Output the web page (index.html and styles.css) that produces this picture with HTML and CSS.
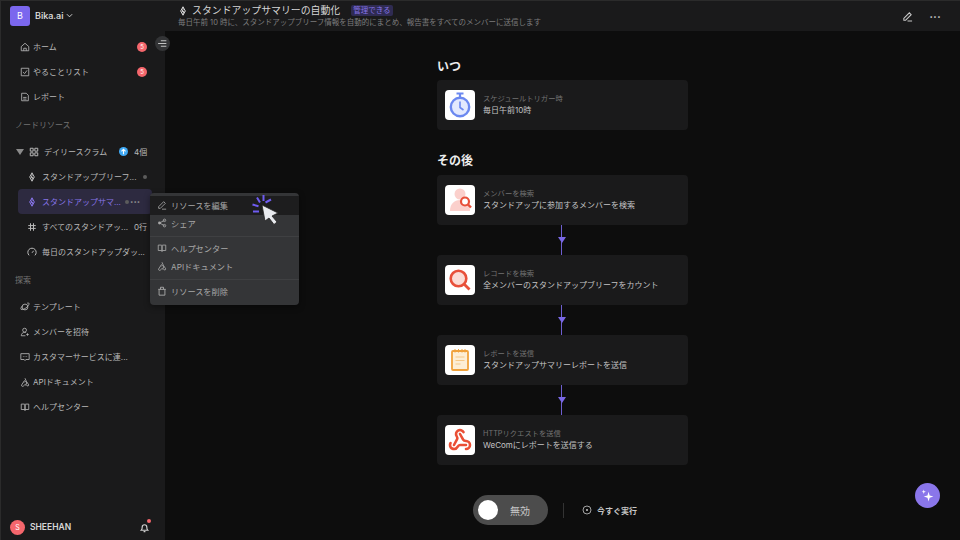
FILE: index.html
```html
<!DOCTYPE html>
<html lang="ja">
<head>
    <meta charset="UTF-8">
    <title>Bika.ai</title>
    <link rel="stylesheet" href="styles.css">
</head>
<body>
    <svg class="defs" width="0" height="0">
        <symbol id="i-auto" viewBox="0 0 12 12"><path d="M6 1 3.2 6 6 11l2.8-5z M6 1v3.500L4.800 6.500H7.200L6 8.500V11" fill="none" stroke="currentColor" stroke-width="1.200" stroke-linejoin="round"/></symbol>
        <symbol id="i-book" viewBox="0 0 12 12"><path d="M1.500 2.500h3.500c.6 0 1 .4 1 1v6.500c0-.6-.4-1-1-1H1.500z M10.500 2.500H7c-.6 0-1 .4-1 1v6.500c0-.6.4-1 1-1h3.500z" fill="none" stroke="currentColor" stroke-width="1"/></symbol>
        <symbol id="i-api" viewBox="0 0 12 12"><path d="M6 1.500 7.500 5 10.500 9.500a1.200 1.200 0 0 1-2.400 0H5 M5.500 4 2 9.500a1.300 1.300 0 1 0 2.500.6 M5 6.500a1.600 1.600 0 1 1 1.500 2.200" fill="none" stroke="currentColor" stroke-width="1"/></symbol>
    </svg>

    <aside class="sidebar">
        <div class="space">
            <span class="space-logo">B</span>
            <span class="space-name">Bika.ai</span>
            <svg class="chev" viewBox="0 0 8 8"><path d="M1 2.500 4 5.500 7 2.500" fill="none" stroke="currentColor" stroke-width="1"/></svg>
        </div>

        <nav class="nav">
            <a class="nav-item">
                <svg class="ico" viewBox="0 0 12 12"><path d="M1.500 5.500 6 1.500l4.500 4v5h-9z M4.500 10.500V7.500h3v3" fill="none" stroke="currentColor" stroke-width="1"/></svg>
                <span class="nav-text">ホーム</span><span class="count">5</span>
            </a>
            <a class="nav-item">
                <svg class="ico" viewBox="0 0 12 12"><path d="M1.500 1.500h9v9h-9z M3.500 6l2 2 3-4" fill="none" stroke="currentColor" stroke-width="1"/></svg>
                <span class="nav-text">やることリスト</span><span class="count">5</span>
            </a>
            <a class="nav-item">
                <svg class="ico" viewBox="0 0 12 12"><path d="M2 1.500h5.500l2.500 2.500v6.500H2z M3.800 6.500h4 M3.800 8.500h4" fill="none" stroke="currentColor" stroke-width="1"/></svg>
                <span class="nav-text">レポート</span>
            </a>
        </nav>

        <div class="section-label">ノードリソース</div>

        <div class="tree">
            <div class="tree-head">
                <span class="caret"></span>
                <svg class="ico grid" viewBox="0 0 12 12"><path d="M1.500 1.500h3.500v3.500H1.500z M7 1.500h3.500v3.500H7z M1.500 7h3.500v3.500H1.500z M7 7h3.500v3.500H7z" fill="none" stroke="currentColor" stroke-width="1.200"/></svg>
                <span class="tree-title">デイリースクラム</span>
                <span class="up-badge">
                    <svg viewBox="0 0 8 8"><path d="M4 6.500V2 M2.200 3.800 4 2l1.800 1.800" fill="none" stroke="#fff" stroke-width="1"/></svg>
                </span>
                <span class="tree-count">4個</span>
            </div>
            <a class="tree-item">
                <svg class="ico"><use href="#i-auto"/></svg>
                <span class="tree-text">スタンドアップブリーフ...</span><span class="dot"></span>
            </a>
            <a class="tree-item is-active">
                <svg class="ico"><use href="#i-auto"/></svg>
                <span class="tree-text">スタンドアップサマ...</span>
                <span class="dot"></span><span class="more">•••</span>
            </a>
            <a class="tree-item">
                <svg class="ico" viewBox="0 0 12 12"><path d="M4.200 1.500v9 M7.800 1.500v9 M1.500 4.300h9 M1.500 7.700h9" fill="none" stroke="currentColor" stroke-width="1.200"/></svg>
                <span class="tree-text">すべてのスタンドアッ...</span><span class="rows">0行</span>
            </a>
            <a class="tree-item">
                <svg class="ico" viewBox="0 0 12 12"><path d="M2.500 10A5 5 0 1 1 9.500 10 M6 7 8 4.500" fill="none" stroke="currentColor" stroke-width="1.200"/></svg>
                <span class="tree-text">毎日のスタンドアップダッ...</span>
            </a>
        </div>

        <div class="section-label">探索</div>

        <nav class="nav">
            <a class="nav-item">
                <svg class="ico" viewBox="0 0 12 12"><circle cx="6" cy="6" r="3.500" fill="none" stroke="currentColor"/><path d="M3 4.500C1 6.500.5 8.500 1.500 9c1.500.6 5-1 7-3s3-4 2-4.700c-.5-.3-1.300-.2-2 .2" fill="none" stroke="currentColor"/></svg>
                <span class="nav-text">テンプレート</span>
            </a>
            <a class="nav-item">
                <svg class="ico" viewBox="0 0 12 12"><circle cx="5.500" cy="3.800" r="2.300" fill="none" stroke="currentColor"/><path d="M1.500 10.500c0-2.500 1.800-4 4-4 .7 0 1.300.1 1.800.4 M1.500 10.500h5 M9 7.500v3 M7.500 9h3" fill="none" stroke="currentColor"/></svg>
                <span class="nav-text">メンバーを招待</span>
            </a>
            <a class="nav-item">
                <svg class="ico" viewBox="0 0 12 12"><path d="M1 2h10v7H7l-1 1.300L5 9H1z M3.500 5.500h.8 M5.600 5.500h.8 M7.700 5.500h.8" fill="none" stroke="currentColor"/></svg>
                <span class="nav-text">カスタマーサービスに連...</span>
            </a>
            <a class="nav-item">
                <svg class="ico"><use href="#i-api"/></svg>
                <span class="nav-text">APIドキュメント</span>
            </a>
            <a class="nav-item">
                <svg class="ico"><use href="#i-book"/></svg>
                <span class="nav-text">ヘルプセンター</span>
            </a>
        </nav>

        <div class="user">
            <span class="avatar">S</span>
            <span class="user-name">SHEEHAN</span>
            <span class="bell">
                <svg viewBox="0 0 12 12"><path d="M2.500 9c1-1 1-2 1-3.500a2.500 2.500 0 0 1 5 0C8.500 7 8.500 8 9.500 9z M5 10.500h2" fill="none" stroke="currentColor" stroke-width="1.300"/></svg>
                <span class="bell-dot"></span>
            </span>
        </div>
    </aside>

    <main class="main">
        <header class="topbar">
            <div class="topbar-info">
                <div class="topbar-title">
                    <svg class="ico"><use href="#i-auto"/></svg>
                    <span>スタンドアップサマリーの自動化</span>
                    <span class="tag">管理できる</span>
                </div>
                <div class="topbar-sub">毎日午前 10 時に、スタンドアップブリーフ情報を自動的にまとめ、報告書をすべてのメンバーに送信します</div>
            </div>
            <div class="topbar-actions">
                <svg class="ico-btn" viewBox="0 0 12 12"><path d="M2 8 8 2l2 2-6 6H2z M6 11h5" fill="none" stroke="currentColor" stroke-width="1.100"/></svg>
                <span class="topbar-more">•••</span>
            </div>
        </header>

        <section class="flow">
            <h2 class="flow-title">いつ</h2>
            <div class="step">
                <span class="step-icon">
                    <svg viewBox="0 0 30 30"><path d="M11.500 3.500h7 M15 3.500v4" stroke="#6b88f0" stroke-width="2.200" fill="none"/><circle cx="15" cy="17" r="9.200" fill="#e3e9fe" stroke="#6b88f0" stroke-width="2.400"/><path d="M15 11.500v6l3.500 2.500" stroke="#6b88f0" stroke-width="1.600" fill="none"/></svg>
                </span>
                <div class="step-body"><div class="step-kind">スケジュールトリガー時</div><div class="step-name">毎日午前10時</div></div>
            </div>

            <h2 class="flow-title then">その後</h2>
            <div class="step">
                <span class="step-icon">
                    <svg viewBox="0 0 30 30"><circle cx="15" cy="9" r="5.500" fill="#fbd0cc"/><path d="M5 26c0-7 4-11 10-11s10 4 10 11z" fill="#fbd0cc"/><circle cx="20" cy="16.500" r="4" fill="#fff" stroke="#e8503a" stroke-width="2.200"/><path d="m23 19.500 3 3" stroke="#e8503a" stroke-width="2.400"/></svg>
                </span>
                <div class="step-body"><div class="step-kind">メンバーを検索</div><div class="step-name">スタンドアップに参加するメンバーを検索</div></div>
            </div>
            <div class="link"><span class="arrow"></span></div>
            <div class="step">
                <span class="step-icon">
                    <svg viewBox="0 0 30 30"><circle cx="13.500" cy="13.500" r="7.800" fill="#fbdcd6" stroke="#e8503a" stroke-width="2.600"/><path d="m19.500 19.500 5 5" stroke="#e8503a" stroke-width="2.800"/></svg>
                </span>
                <div class="step-body"><div class="step-kind">レコードを検索</div><div class="step-name">全メンバーのスタンドアップブリーフをカウント</div></div>
            </div>
            <div class="link"><span class="arrow"></span></div>
            <div class="step">
                <span class="step-icon">
                    <svg viewBox="0 0 30 30"><rect x="7" y="6" width="16" height="19" rx="1" fill="#fdeed5" stroke="#f0a23c" stroke-width="1.800"/><path d="M10 4v3.500 M13.500 4v3.500 M17 4v3.500 M20 4v3.500" stroke="#f0a23c" stroke-width="1"/><path d="M10.500 12h9 M10.500 15.500h9 M10.500 19h5" stroke="#f6c987" stroke-width="1"/></svg>
                </span>
                <div class="step-body"><div class="step-kind">レポートを送信</div><div class="step-name">スタンドアップサマリーレポートを送信</div></div>
            </div>
            <div class="link"><span class="arrow"></span></div>
            <div class="step">
                <span class="step-icon">
                    <svg viewBox="0 0 24 24"><g transform="translate(2.400 2.400) scale(.8)" fill="none" stroke="#ea4f35" stroke-width="2.600" stroke-linecap="round" stroke-linejoin="round"><path d="M18 16.980h-5.990c-1.100 0-1.950.94-2.480 1.900A4 4 0 0 1 2 17c.01-.7.2-1.400.57-2"/><path d="m6 17 3.130-5.780c.53-.97.1-2.180-.5-3.100a4 4 0 1 1 6.890-4.060"/><path d="m12 6 3.130 5.730C15.660 12.700 16.900 13 18 13a4 4 0 0 1 0 8"/></g></svg>
                </span>
                <div class="step-body"><div class="step-kind">HTTPリクエストを送信</div><div class="step-name">WeComにレポートを送信する</div></div>
            </div>

            <div class="run-bar">
                <div class="toggle"><span class="knob"></span><span class="toggle-text">無効</span></div>
                <span class="run-sep"></span>
                <a class="run-now">
                    <svg viewBox="0 0 10 10"><circle cx="5" cy="5" r="4" fill="none" stroke="currentColor" stroke-width=".8"/><circle cx="5" cy="5" r="1" fill="currentColor"/></svg>
                    今すぐ実行
                </a>
            </div>
        </section>
    </main>

    <!-- overlays -->
    <button class="collapse">
        <svg viewBox="0 0 10 10"><path d="M3.500 2.500h5 M1 5h7.500 M3.500 7.500h5" fill="none" stroke="currentColor" stroke-width="1"/></svg>
    </button>

    <div class="menu">
        <a class="menu-item is-hover">
            <svg class="ico" viewBox="0 0 12 12"><path d="M2 8 8 2l2 2-6 6H2z M6 11h5" fill="none" stroke="currentColor"/></svg>リソースを編集
        </a>
        <a class="menu-item">
            <svg class="ico" viewBox="0 0 12 12"><circle cx="9" cy="2.800" r="1.500" fill="none" stroke="currentColor"/><circle cx="9" cy="9.200" r="1.500" fill="none" stroke="currentColor"/><circle cx="3" cy="6" r="1.700" fill="currentColor"/><path d="M3 6 9 2.800M3 6l6 3.200" stroke="currentColor"/></svg>シェア
        </a>
        <div class="menu-line"></div>
        <a class="menu-item">
            <svg class="ico"><use href="#i-book"/></svg>ヘルプセンター
        </a>
        <a class="menu-item">
            <svg class="ico"><use href="#i-api"/></svg>APIドキュメント
        </a>
        <div class="menu-line"></div>
        <a class="menu-item">
            <svg class="ico" viewBox="0 0 12 12"><path d="M1.500 4h9 M2.500 4v7h7V4 M4.200 4V1.500h3.600V4" fill="none" stroke="currentColor" stroke-width="1.100"/></svg>リソースを削除
        </a>
    </div>

    <svg class="pointer" viewBox="0 0 30 34">
        <path d="M2 17.500h6 M1.500 10.500l6 1.800 M6 3.500l3 5 M12.500 1v6 M20 5.500l-5.500 3" stroke="#6f5cf0" stroke-width="2" fill="none"/>
        <path d="M11 11 27 19l-6 3 5 6-3 2.500-5-6.500-4 3z" fill="#e8eaee" stroke="#222" stroke-width=".8"/>
    </svg>

    <button class="fab">
        <svg viewBox="0 0 14 14"><path d="M8 3.500 9 7l3.500 1L9 9l-1 3.500L7 9 3.500 8 7 7z M3.500 1.500l.5 1.500 1.500.5-1.500.5-.5 1.500L3 4l-1.500-.5L3 3z" fill="#fff"/></svg>
    </button>
</body>
</html>
```

FILE: styles.css
```css
* {
    box-sizing: border-box;
}

body {
    margin: 0;
    width: 960px;
    height: 540px;
    overflow: hidden;
    display: flex;
    position: relative;
    background-color: #0d0d0d;
    color: #b8b8b8;
    font-family: Inter, "Noto Sans CJK JP", sans-serif;
    font-size: 8px;
}

.defs {
    position: absolute;
}

.ico {
    width: 10px;
    height: 10px;
    flex: none;
}

/* sidebar */
.sidebar {
    width: 165px;
    flex: none;
    display: flex;
    flex-direction: column;
    background-color: #1a1a1b;
    border-left: 1px solid #2b2b2b;
    border-top: 1px solid #2b2b2b;
}

.space {
    height: 30px;
    display: flex;
    align-items: center;
    padding: 0 0 1px 9px;
    margin-bottom: 3px;
    color: #e4e4e4;
}

.space-logo {
    width: 20px;
    height: 20px;
    border-radius: 3px;
    background-color: #7b67ee;
    color: #fff;
    display: flex;
    align-items: center;
    justify-content: center;
    font-size: 9px;
}

.space-name {
    margin-left: 5px;
    font-size: 9px;
    font-weight: 500;
}

.chev {
    width: 7px;
    height: 7px;
    margin-left: 3px;
}

.nav {
    display: flex;
    flex-direction: column;
}

.nav-item {
    height: 25px;
    display: flex;
    align-items: center;
    gap: 3px;
    padding: 0 18px 0 19px;
}

.nav-text {
    white-space: nowrap;
}

.count {
    margin-left: auto;
    width: 10px;
    height: 10px;
    border-radius: 50%;
    background-color: #f4666c;
    color: #fff;
    font-size: 6px;
    display: flex;
    align-items: center;
    justify-content: center;
}

.section-label {
    height: 27px;
    padding: 4px 0 0 14px;
    margin-bottom: 3px;
    display: flex;
    align-items: center;
    color: #737373;
}

.tree {
    display: flex;
    flex-direction: column;
}

.tree-head {
    height: 25px;
    display: flex;
    align-items: center;
    padding-left: 15px;
}

.caret {
    width: 0;
    height: 0;
    border-left: 4px solid transparent;
    border-right: 4px solid transparent;
    border-top: 6px solid #8a8a8a;
}

.grid {
    margin-left: 5px;
}

.tree-title {
    margin-left: 5px;
    width: 75px;
}

.up-badge {
    width: 9px;
    height: 9px;
    border-radius: 50%;
    background-color: #3fa9f5;
    display: flex;
}

.tree-count {
    margin-left: 6px;
}

.tree-item {
    height: 25px;
    display: flex;
    align-items: center;
    padding: 0 18px 0 26px;
    gap: 5px;
    color: #b8b8b8;
}

.tree-text {
    white-space: nowrap;
    flex: 1;
}

.tree-item.is-active {
    margin: 0 13px 0 17px;
    padding: 0 0 0 9px;
    border-radius: 4px;
    background-color: #2d2a40;
    color: #8674e6;
}

.is-active .tree-text {
    flex: none;
    width: 80px;
}

.dot {
    width: 4px;
    height: 4px;
    border-radius: 50%;
    background-color: #5c5c5c;
    flex: none;
    margin-left: 2px;
}

.is-active .dot {
    margin-left: -2px;
}

.more {
    font-size: 6px;
    color: #8f8f8f;
    margin-left: -4px;
}

.rows {
    flex: none;
}

.user {
    margin-top: auto;
    height: 26px;
    display: flex;
    align-items: center;
    padding: 0 15px 0 9px;
}

.avatar {
    width: 15px;
    height: 15px;
    border-radius: 50%;
    background-color: #f4666c;
    color: #fff;
    font-size: 7px;
    display: flex;
    align-items: center;
    justify-content: center;
}

.user-name {
    margin-left: 5px;
    font-weight: 600;
    font-size: 8.5px;
    color: #d8d8d8;
}

.bell {
    position: relative;
    width: 11px;
    height: 11px;
    margin-left: auto;
    color: #cfcfcf;
}

.bell svg {
    display: block;
}

.bell-dot {
    position: absolute;
    top: -3px;
    right: -1px;
    width: 4px;
    height: 4px;
    border-radius: 50%;
    background-color: #f4666c;
}

/* main column */
.main {
    flex: 1;
    display: flex;
    flex-direction: column;
    min-width: 0;
}

.topbar {
    height: 31px;
    flex: none;
    display: flex;
    align-items: center;
    justify-content: space-between;
    padding: 0 19px 0 13px;
    background-color: #1a1a1b;
    border-top: 1px solid #2b2b2b;
}

.topbar-title {
    display: flex;
    align-items: center;
    gap: 4px;
    font-size: 9.900px;
    line-height: 13px;
    color: #d6d6d6;
}

.tag {
    margin-left: 7px;
    padding: 0 2px;
    border-radius: 2px;
    background-color: #2f2b52;
    color: #8674e6;
    font-size: 7.500px;
    line-height: 11px;
}

.topbar-sub {
    font-size: 7.500px;
    line-height: 10px;
    color: #7d7d7d;
    margin-top: 1px;
}

.topbar-actions {
    display: flex;
    align-items: center;
    gap: 16px;
    color: #c8c8c8;
}

.ico-btn {
    width: 11px;
    height: 11px;
}

.topbar-more {
    font-size: 6px;
    letter-spacing: .5px;
}

.flow {
    width: 251px;
    margin: 0 auto;
    padding-top: 28px;
    display: flex;
    flex-direction: column;
}

.flow-title {
    margin: 0 0 5px;
    font-size: 12px;
    line-height: 16px;
    font-weight: 700;
    color: #ececec;
}

.flow-title.then {
    margin: 23px 0 6px;
}

.step {
    height: 50px;
    display: flex;
    align-items: center;
    gap: 8px;
    padding: 0 8px;
    border-radius: 4px;
    background-color: #1a1a1b;
}

.step-icon {
    width: 30px;
    height: 30px;
    flex: none;
    border-radius: 4px;
    background-color: #fff;
}

.step-icon svg {
    display: block;
}

.step-body {
    margin-top: -1px;
}

.step-kind {
    font-size: 7.300px;
    line-height: 11px;
    color: #737373;
}

.step-name {
    font-size: 8px;
    line-height: 12px;
    color: #c4c4c4;
}

.link {
    height: 30px;
    width: 1px;
    margin-left: 124px;
    background-color: #6f5fd0;
    display: flex;
    align-items: center;
    justify-content: center;
}

.arrow {
    flex: none;
    width: 0;
    height: 0;
    border-left: 4px solid transparent;
    border-right: 4px solid transparent;
    border-top: 6px solid #7a68e6;
}

.run-bar {
    margin: 30px 0 0 36px;
    display: flex;
    align-items: center;
}

.toggle {
    width: 75px;
    height: 30px;
    border-radius: 15px;
    background-color: #4c4c4c;
    display: flex;
    align-items: center;
    padding-left: 5px;
}

.knob {
    width: 20px;
    height: 20px;
    border-radius: 50%;
    background-color: #fff;
}

.toggle-text {
    margin-left: 12px;
    font-size: 10px;
    color: #c8c8c8;
}

.run-sep {
    width: 1px;
    height: 15px;
    margin: 0 18px 0 15px;
    background-color: #333;
}

.run-now {
    display: flex;
    align-items: center;
    gap: 5px;
    font-weight: 700;
    color: #c8c8c8;
}

.run-now svg {
    width: 10px;
    height: 10px;
}

/* things lying over the page */
.collapse {
    position: absolute;
    left: 155px;
    top: 36px;
    width: 15px;
    height: 15px;
    padding: 2px;
    border: none;
    border-radius: 50%;
    background-color: #333436;
    color: #c4c4c4;
}

.collapse svg {
    display: block;
}

.menu {
    position: absolute;
    left: 150px;
    top: 193px;
    width: 149px;
    height: 112px;
    padding-top: 3px;
    border-radius: 4px;
    background-color: #343537;
    color: #a8a8a8;
    box-shadow: 0 2px 6px rgba(0, 0, 0, .4);
}

.menu-item {
    height: 18px;
    display: flex;
    align-items: center;
    gap: 4px;
    padding: 0 0 2px 7px;
    font-size: 8.200px;
}

.menu-item.is-hover {
    background-color: #1d1d1e;
    height: 19px;
}

.menu-line {
    height: 1px;
    margin: 3px 0;
    background-color: #3f4042;
}

.pointer {
    position: absolute;
    left: 251px;
    top: 194px;
    width: 30px;
    height: 34px;
}

.fab {
    position: absolute;
    left: 915px;
    top: 483px;
    width: 25px;
    height: 25px;
    padding: 5px;
    border: none;
    border-radius: 50%;
    background-color: #8a76ea;
}

.fab svg {
    display: block;
}
```
